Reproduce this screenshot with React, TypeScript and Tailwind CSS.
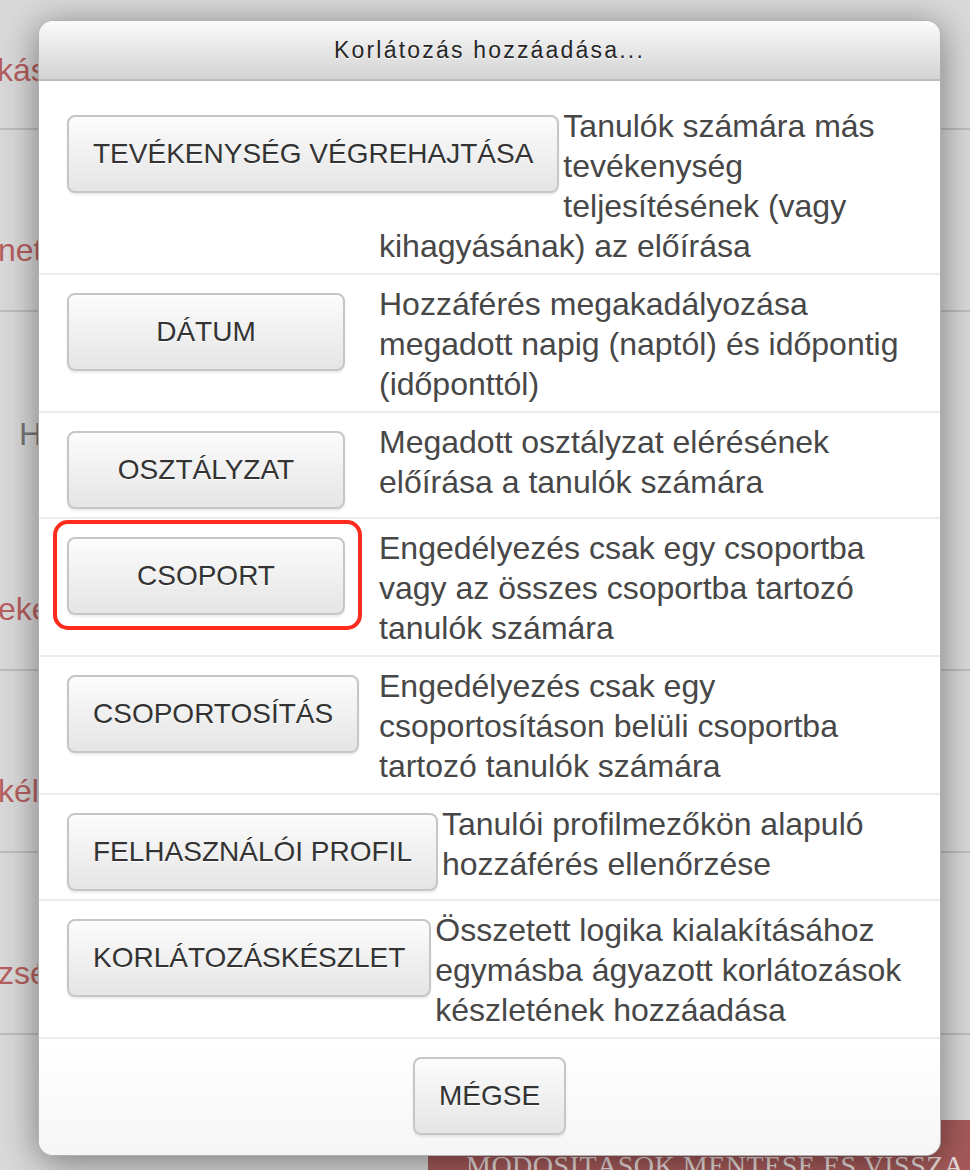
import React from "react";

interface Restriction {
  label: string;
  desc: string;
  marked?: boolean;
}

const Restrictions: Restriction[] = [
  { label: "TEVÉKENYSÉG VÉGREHAJTÁSA", desc: "Tanulók számára más tevékenység teljesítésének (vagy kihagyásának) az előírása" },
  { label: "DÁTUM", desc: "Hozzáférés megakadályozása megadott napig (naptól) és időpontig (időponttól)" },
  { label: "OSZTÁLYZAT", desc: "Megadott osztályzat elérésének előírása a tanulók számára" },
  { label: "CSOPORT", desc: "Engedélyezés csak egy csoportba vagy az összes csoportba tartozó tanulók számára", marked: true },
  { label: "CSOPORTOSÍTÁS", desc: "Engedélyezés csak egy csoportosításon belüli csoportba tartozó tanulók számára" },
  { label: "FELHASZNÁLÓI PROFIL", desc: "Tanulói profilmezőkön alapuló hozzáférés ellenőrzése" },
  { label: "KORLÁTOZÁSKÉSZLET", desc: "Összetett logika kialakításához egymásba ágyazott korlátozások készletének hozzáadása" },
];

const btn =
  "inline-flex h-[78px] min-w-[278px] items-center justify-center rounded-[8px] border-2 border-[#c6c6c6] bg-gradient-to-b from-[#fcfcfc] to-[#e5e5e5] px-[24px] text-[28px] leading-none text-[#333] whitespace-nowrap shadow-[0_2px_2px_rgba(0,0,0,0.08)] [text-shadow:0_1px_0_#fff]";

export default function App() {
  return (
    <div className="relative h-[1170px] w-full overflow-hidden bg-[#d9d9d9] font-['Liberation_Sans',Arial,sans-serif]">
      {/* page under the overlay */}
      <div className="text-[32px] leading-[40px] whitespace-nowrap">
        <div className="h-[130px] border-b-2 border-[#bdbdbd] pt-[50px] text-[#b65f5f]">
          <span className="-ml-[3px]">kás</span>
        </div>
        <div className="h-[182px] border-b-2 border-[#bdbdbd] pt-[100px] text-[#b65f5f]">
          <span className="-ml-[2px]">net</span>
        </div>
        <div className="h-[359px] border-b-2 border-[#bdbdbd] pt-[102px]">
          <div className="ml-[19px] text-[#777]">H</div>
          <div className="mt-[135px] -ml-[2px] text-[#b65f5f]">eke</div>
        </div>
        <div className="h-[182px] border-b-2 border-[#bdbdbd] pt-[100px] text-[#b65f5f]">
          <span className="-ml-[2px]">kél</span>
        </div>
        <div className="h-[182px] border-b-2 border-[#bdbdbd] pt-[100px] text-[#b65f5f]">
          <span className="-ml-[2px]">zség</span>
        </div>
        <div className="ml-[428px] mt-[85px] h-[80px] bg-[#a65a5a] pl-[38px] pt-[26px] font-['Liberation_Serif',serif] text-[28px] tracking-[0.5px] text-[#e9dede]">
          MÓDOSÍTÁSOK MENTÉSE ÉS VISSZA
        </div>
      </div>

      {/* dialog */}
      <div className="absolute left-[38px] top-[20px] w-[903px] overflow-hidden rounded-[15px] border border-[#b0b0b0] bg-white shadow-[0_6px_36px_rgba(0,0,0,0.45)]">
        <div className="flex h-[60px] items-center justify-center border-b-2 border-[#bababa] bg-gradient-to-b from-[#fbfbfb] to-[#d3d3d3] text-[23px] tracking-[2.2px] text-[#262626] [text-shadow:0_1px_1px_#fff]">
          Korlátozás hozzáadása...
        </div>

        <div className="pt-[16px]">
          {Restrictions.map((r) => (
            <div key={r.label} className="flow-root border-b-2 border-[#ececec] px-[28px] pb-[7px] pt-[9px]">
              <span className="relative float-left mb-[1px] mr-[4px] mt-[9px]">
                <button className={btn}>{r.label}</button>
                {r.marked && (
                  <span className="pointer-events-none absolute -bottom-[15px] -left-[14px] -right-[17px] -top-[17px] rounded-[15px] border-[4px] border-[#ff2b1c]" />
                )}
              </span>
              <div className="ml-[312px] text-[32px] leading-[40px] text-[#474747]">{r.desc}</div>
            </div>
          ))}
        </div>

        <div className="flex justify-center bg-gradient-to-b from-white to-[#f6f6f6] pb-[20px] pt-[18px]">
          <button className={btn + " !min-w-0"}>MÉGSE</button>
        </div>
      </div>
    </div>
  );
}
